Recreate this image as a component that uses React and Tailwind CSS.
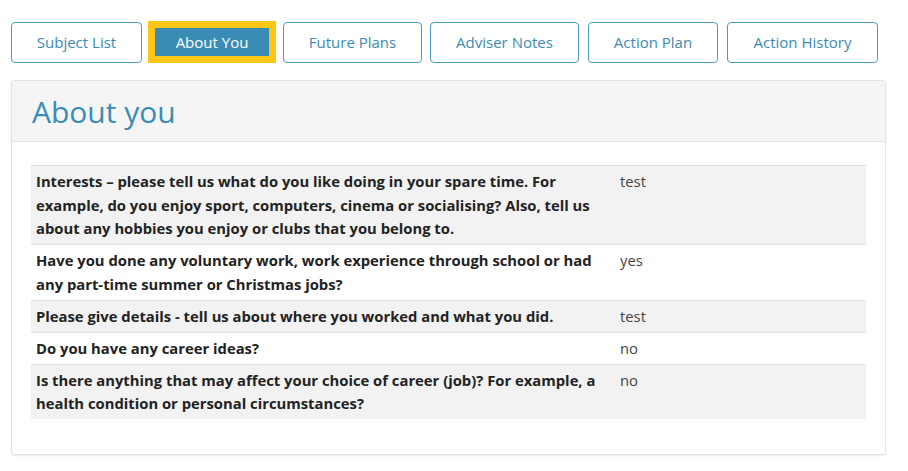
import React from 'react';

const tabs = [
  { label: 'Subject List', cls: 'w-[131px]' },
  { label: 'About You', cls: 'w-[128px] ml-[6px]', active: true },
  { label: 'Future Plans', cls: 'w-[139px] ml-[7px]' },
  { label: 'Adviser Notes', cls: 'w-[149px] ml-[8px]' },
  { label: 'Action Plan', cls: 'w-[130px] ml-[9px]' },
  { label: 'Action History', cls: 'w-[151px] ml-[9px]' },
];

const rows = [
  {
    q: 'Interests – please tell us what do you like doing in your spare time. For example, do you enjoy sport, computers, cinema or socialising? Also, tell us about any hobbies you enjoy or clubs that you belong to.',
    a: 'test',
  },
  {
    q: 'Have you done any voluntary work, work experience through school or had any part-time summer or Christmas jobs?',
    a: 'yes',
  },
  { q: 'Please give details - tell us about where you worked and what you did.', a: 'test' },
  { q: 'Do you have any career ideas?', a: 'no' },
  {
    q: 'Is there anything that may affect your choice of career (job)? For example, a health condition or personal circumstances?',
    a: 'no',
  },
];

export default function App() {
  return (
    <div className="w-[908px] h-[471px] bg-white font-['Open_Sans',sans-serif] overflow-hidden">
      {/* Tabs */}
      <div className="flex items-center pl-[11px] pt-[21px]">
        {tabs.map((t) =>
          t.active ? (
            <div key={t.label} className={`border-[7px] border-[#fdc516] h-[42px] ${t.cls}`}>
              <button className="w-full h-full bg-[#3a8cb5] text-white text-[15px]">{t.label}</button>
            </div>
          ) : (
            <button
              key={t.label}
              className={`h-[41px] border border-[#4a9ac2] rounded-[4px] text-[#3c8ab3] text-[15px] ${t.cls}`}
            >
              {t.label}
            </button>
          )
        )}
      </div>

      {/* Panel */}
      <div className="mx-[11px] mt-[17px] w-[875px] border border-[#e3e3e3] rounded-[3px] shadow-[0_1px_2px_rgba(0,0,0,0.08)]">
        <div className="bg-[#f5f5f5] h-[61px] border-b border-[#e3e3e3] px-[20px] flex items-center">
          <h1 className="text-[30px] text-[#3a8cb5] leading-none mt-[2px]">About you</h1>
        </div>
        <div className="px-[19px] pt-[23px] pb-[35px]">
          <table className="w-full border-collapse text-[14.8px] leading-[23.5px]">
            <tbody>
              {rows.map((r, i) => (
                <tr key={i} className={`border-t border-[#dee2e6] ${i % 2 === 0 ? 'bg-[#f2f2f2]' : 'bg-white'}`}>
                  <td className="w-[584px] align-top pl-[5px] pr-[14px] pt-[4px] pb-[3.5px] font-bold text-[#222]">{r.q}</td>
                  <td className="align-top px-[5px] pt-[4px] pb-[3.5px] text-[#444]">{r.a}</td>
                </tr>
              ))}
            </tbody>
          </table>
        </div>
      </div>
    </div>
  );
}
